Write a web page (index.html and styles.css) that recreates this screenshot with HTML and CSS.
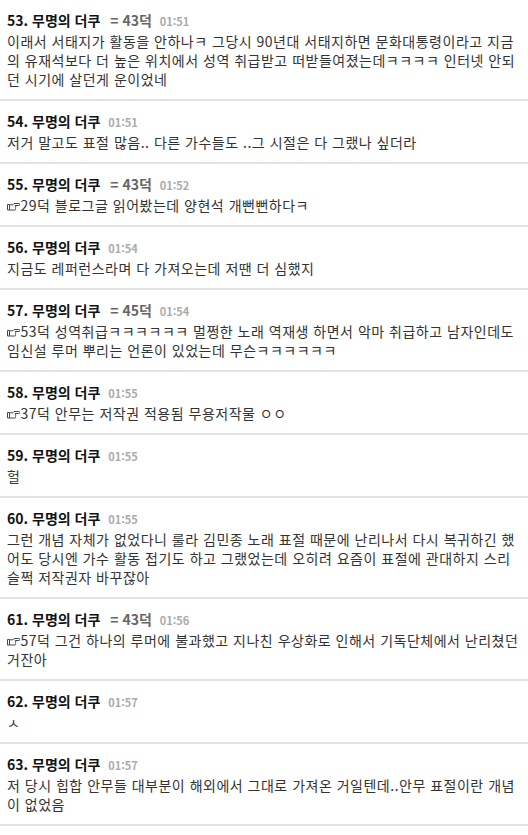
FILE: index.html
```html
<!DOCTYPE html>
<html lang="ko">
<head>
<meta charset="utf-8">
<title>댓글</title>
<link rel="stylesheet" href="styles.css">
</head>
<body>
<ul class="comments">
  <li class="comment">
    <div class="head"><span class="name">53. 무명의 더쿠</span> <span class="ref">= 43덕</span> <span class="time">01:51</span></div>
    <div class="body">이래서 서태지가 활동을 안하나ㅋ 그당시 90년대 서태지하면 문화대통령이라고 지금 의 유재석보다 더 높은 위치에서 성역 취급받고 떠받들여졌는데ㅋㅋㅋㅋ 인터넷 안되던 시기에 살던게 운이었네</div>
  </li>
  <li class="comment">
    <div class="head"><span class="name">54. 무명의 더쿠</span> <span class="time">01:51</span></div>
    <div class="body">저거 말고도 표절 많음.. 다른 가수들도 ..그 시절은 다 그랬나 싶더라</div>
  </li>
  <li class="comment">
    <div class="head"><span class="name">55. 무명의 더쿠</span> <span class="ref">= 43덕</span> <span class="time">01:52</span></div>
    <div class="body"><svg class="point" viewBox="0 0 13 9" aria-label="☞"><path d="M0.5 2.5h2v5.5h-2z"/><path d="M2.5 2.8H6L7 1.5h4.8a1 1 0 0 1 0 2H8.2a0.9 0.9 0 0 1 0 1.5a0.8 0.8 0 0 1 0 1.5a0.8 0.8 0 0 1-0.3 1.5H2.5z"/></svg>29덕 블로그글 읽어봤는데 양현석 개뻔뻔하다ㅋ</div>
  </li>
  <li class="comment">
    <div class="head"><span class="name">56. 무명의 더쿠</span> <span class="time">01:54</span></div>
    <div class="body">지금도 레퍼런스라며 다 가져오는데 저땐 더 심했지</div>
  </li>
  <li class="comment">
    <div class="head"><span class="name">57. 무명의 더쿠</span> <span class="ref">= 45덕</span> <span class="time">01:54</span></div>
    <div class="body"><svg class="point" viewBox="0 0 13 9" aria-label="☞"><path d="M0.5 2.5h2v5.5h-2z"/><path d="M2.5 2.8H6L7 1.5h4.8a1 1 0 0 1 0 2H8.2a0.9 0.9 0 0 1 0 1.5a0.8 0.8 0 0 1 0 1.5a0.8 0.8 0 0 1-0.3 1.5H2.5z"/></svg>53덕 성역취급ㅋㅋㅋㅋㅋㅋ 멀쩡한 노래 역재생 하면서 악마 취급하고 남자인데도 임신설 루머 뿌리는 언론이 있었는데 무슨ㅋㅋㅋㅋㅋㅋ</div>
  </li>
  <li class="comment">
    <div class="head"><span class="name">58. 무명의 더쿠</span> <span class="time">01:55</span></div>
    <div class="body"><svg class="point" viewBox="0 0 13 9" aria-label="☞"><path d="M0.5 2.5h2v5.5h-2z"/><path d="M2.5 2.8H6L7 1.5h4.8a1 1 0 0 1 0 2H8.2a0.9 0.9 0 0 1 0 1.5a0.8 0.8 0 0 1 0 1.5a0.8 0.8 0 0 1-0.3 1.5H2.5z"/></svg>37덕 안무는 저작권 적용됨 무용저작물 ㅇㅇ</div>
  </li>
  <li class="comment">
    <div class="head"><span class="name">59. 무명의 더쿠</span> <span class="time">01:55</span></div>
    <div class="body">헐</div>
  </li>
  <li class="comment">
    <div class="head"><span class="name">60. 무명의 더쿠</span> <span class="time">01:55</span></div>
    <div class="body">그런 개념 자체가 없었다니 룰라 김민종 노래 표절 때문에 난리나서 다시 복귀하긴 했어도 당시엔 가수 활동 접기도 하고 그랬었는데 오히려 요즘이 표절에 관대하지 스리슬쩍 저작권자 바꾸잖아</div>
  </li>
  <li class="comment">
    <div class="head"><span class="name">61. 무명의 더쿠</span> <span class="ref">= 43덕</span> <span class="time">01:56</span></div>
    <div class="body"><svg class="point" viewBox="0 0 13 9" aria-label="☞"><path d="M0.5 2.5h2v5.5h-2z"/><path d="M2.5 2.8H6L7 1.5h4.8a1 1 0 0 1 0 2H8.2a0.9 0.9 0 0 1 0 1.5a0.8 0.8 0 0 1 0 1.5a0.8 0.8 0 0 1-0.3 1.5H2.5z"/></svg>57덕 그건 하나의 루머에 불과했고 지나친 우상화로 인해서 기독단체에서 난리쳤던거잔아</div>
  </li>
  <li class="comment">
    <div class="head"><span class="name">62. 무명의 더쿠</span> <span class="time">01:57</span></div>
    <div class="body">ㅅ</div>
  </li>
  <li class="comment">
    <div class="head"><span class="name">63. 무명의 더쿠</span> <span class="time">01:57</span></div>
    <div class="body">저 당시 힙합 안무들 대부분이 해외에서 그대로 가져온 거일텐데..안무 표절이란 개념이 없었음</div>
  </li>
</ul>
</body>
</html>
```

FILE: styles.css
```css
html, body {
  margin: 0;
  padding: 0;
  background: #fff;
}
body {
  font-family: "Noto Sans CJK KR", "Noto Sans", sans-serif;
  color: #333;
}
.comments {
  list-style: none;
  margin: 0;
  padding: 0;
}
.comment {
  padding: 9px 5px 10px 7px;
  border-bottom: 2px solid #e2e2e2;
}
.head {
  line-height: 22px;
  font-size: 14px;
  white-space: nowrap;
}
.name {
  font-weight: bold;
  color: #111;
}
.ref {
  margin-left: 6px;
  font-weight: bold;
  color: #666;
}
.time {
  margin-left: 4px;
  font-size: 11px;
  font-weight: bold;
  color: #aaa;
}
.body {
  font-size: 14px;
  line-height: 19px;
  color: #333;
  letter-spacing: 0.5px;
  word-break: break-all;
}
.point {
  width: 13px;
  height: 9px;
  margin-right: 0.5px;
  vertical-align: 0;
  fill: #fff;
  stroke: #3b4660;
  stroke-width: 1;
  stroke-linejoin: round;
}
```
